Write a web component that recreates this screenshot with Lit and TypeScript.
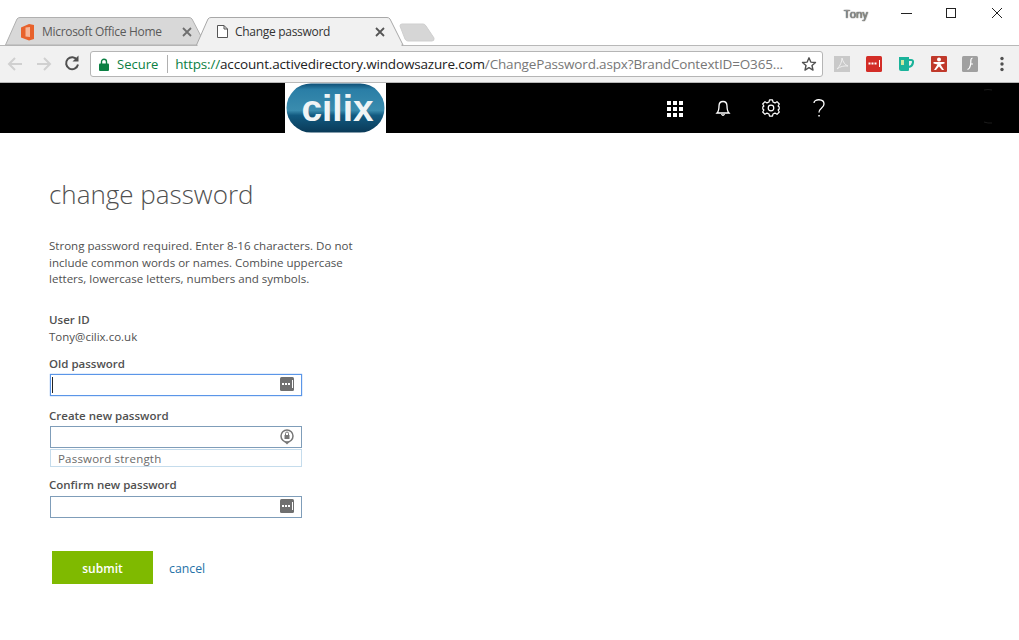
import { LitElement, html, css, svg } from "lit";
import { customElement } from "lit/decorators.js";

const keyIcon = html`<svg class="fieldicon" width="14" height="14" viewBox="0 0 14 14"><rect width="14" height="14" rx="1.5" fill="#6f6f6f"/><rect x="2" y="6" width="2" height="2" fill="#fff"/><rect x="5" y="6" width="2" height="2" fill="#fff"/><rect x="8" y="6" width="2" height="2" fill="#fff"/><rect x="12" y="3" width="1" height="8" fill="#fff"/></svg>`;

@customElement("app-root")
export class AppRoot extends LitElement {
  static styles = css`
    :host { display: block; width: 1019px; height: 640px; overflow: hidden; background: #fff; font-family: "Open Sans", "Noto Sans", sans-serif; }
    .tabstrip { height: 45px; background: #fff; position: relative; display: flex; align-items: flex-start; justify-content: flex-end; }
    .tabshapes { position: absolute; left: 0; top: 0; }
    .tabtext { position: absolute; top: 24px; font-size: 12px; line-height: 16px; white-space: nowrap; letter-spacing: -0.3px; }
    .t1 { left: 42px; color: #5a5a5a; }
    .t2 { left: 235px; color: #333; }
    .tony { margin: 7px 0 0 0; width: 175px; font-size: 10.5px; line-height: 15px; color: #999; text-shadow: 0 0 1px #333, 0 0 1px #333; }
    .toolbar { height: 36px; background: #f1f1f1; border-top: 1px solid #b8b8b8; border-bottom: 1px solid #b8b8b8; display: flex; align-items: center; box-sizing: content-box; }
    .navicons { width: 90px; flex: none; height: 36px; }
    .omni { width: 733px; flex: none; height: 26px; box-sizing: border-box; background: #fff; border: 1px solid #b5b5b5; border-radius: 3px; display: flex; align-items: center; white-space: nowrap; position: relative; }
    .lock { margin-left: 8px; flex: none; }
    .secure { color: #0b8043; margin-left: 8px; font-size: 13px; }
    .sep { width: 1px; height: 18px; background: #b0b0b0; margin: 0 7px 0 9px; flex: none; }
    .url { font-size: 13.5px; color: #777; letter-spacing: -0.16px; }
    .url .g { color: #0b8043; }
    .url .k { color: #222; }
    .star { position: absolute; right: 5px; top: 4px; }
    .exts { flex: none; }
    .header { height: 50px; background: #000; display: flex; align-items: stretch; }
    .logo { margin-left: 285px; width: 101px; height: 50px; background: #fff; flex: none; }
    .hicons { margin-left: 278px; flex: none; height: 50px; }
    .ring { margin-left: 140px; flex: none; }
    .main { padding: 43px 0 0 49px; color: #505050; font-size: 12px; }
    h1 { margin: 0; font-size: 26px; font-weight: 300; line-height: 36px; color: #505050; }
    .desc { margin: 26px 0 0; width: 320px; line-height: 16.5px; font-size: 11.55px; color: #505050; }
    .lbl { font-weight: 600; font-size: 11.5px; line-height: 16px; color: #505050; }
    .uid { margin-top: 24.5px; }
    .val { font-size: 11.5px; line-height: 16px; margin-top: 1px; color: #505050; }
    .field { margin: 3px 0 0 1px; width: 252px; height: 22px; box-sizing: border-box; border: 1px solid #7f9db9; position: relative; background: #fff; }
    .field.tight { margin-top: 2px; }
    .field.focus { border-color: #5b96e8; box-shadow: 0 0 1px #5b96e8; }
    .caret { position: absolute; left: 1px; top: 2px; width: 1px; height: 16px; background: #222; }
    .fieldicon { position: absolute; right: 7px; top: 2px; }
    .strength { margin: 1px 0 0 1px; width: 252px; height: 18px; box-sizing: border-box; border: 1px solid #c5dcec; font-size: 11.5px; line-height: 18px; padding-left: 7px; color: #6a6a6a; letter-spacing: 0.2px; }
    .gap-old { margin-top: 11px; }
    .gap-new { margin-top: 12px; }
    .gap-confirm { margin-top: 10px; }
    .actions { margin: 33px 0 0 3px; display: flex; align-items: center; }
    .submit { width: 101px; height: 33px; box-sizing: border-box; padding-top: 1px; background: #7fba00; color: #fff; font-size: 12px; font-weight: 600; display: flex; align-items: center; justify-content: center; }
    .cancel { margin-left: 16px; padding-top: 1px; color: #2672a8; font-size: 12.3px; }
  `;

  render() {
    return html`
      <div class="tabstrip">
        <svg class="tabshapes" width="1019" height="46" viewBox="0 0 1019 46">
          <path d="M5.5 45 L17 19 Q18 17.5 20 17.5 L189 17.5 Q191 17.5 192 19 L203 40 L199 45 Z" fill="#d8d8d8" stroke="#b0b0b0"/>
          <path d="M196.5 45 L208 19 Q209 17.5 211 17.5 L387 17.5 Q389 17.5 390 19 L403 45 Z" fill="#f1f1f1" stroke="#a8a8a8"/>
          <rect x="197.5" y="44" width="204" height="3" fill="#f1f1f1"/>
          <path d="M400 26 Q400 24 402 24 L423 24 Q425 24 426 26 L434 38 Q434.5 41 432 41 L408 41 Q406 41 405 39 Z" fill="#d6d6d6" stroke="#cfcfcf"/>
          <path d="M21 27.5 L29 24 L34 25 L34 39 L29 40.5 L21 37.5 Z" fill="#e8622c"/>
          <path d="M25.5 27.5 L30 27 L30 37 L25.5 36.5 Z" fill="#f6b79a"/>
          <path d="M183 28 L191 36 M191 28 L183 36" stroke="#6e6e6e" stroke-width="1.8"/>
          <path d="M217.5 25.5 H224 L227.5 29 V37.5 H217.5 Z M224 25.5 V29 H227.5" fill="#fff" stroke="#555" stroke-width="1"/>
          <path d="M376 28 L384 36 M384 28 L376 36" stroke="#555" stroke-width="1.8"/>
          <path d="M901 13.5 H912" stroke="#222" stroke-width="1"/>
          <rect x="946.5" y="8.5" width="9" height="9" fill="none" stroke="#222"/>
          <path d="M992 8 L1002 18 M1002 8 L992 18" stroke="#222" stroke-width="1"/>
        </svg>
        <span class="tabtext t1">Microsoft Office Home</span>
        <span class="tabtext t2">Change password</span>
        <div class="tony">Tony</div>
      </div>
      <div class="toolbar">
        <svg class="navicons" width="90" height="36" viewBox="0 0 90 36">
          <path d="M9 18 H22 M15 12 L9 18 L15 24" fill="none" stroke="#d0d0d0" stroke-width="2"/>
          <path d="M37 18 H50 M44 12 L50 18 L44 24" fill="none" stroke="#d0d0d0" stroke-width="2"/>
          <path d="M77.2 14 A6 6 0 1 0 78 18.5" fill="none" stroke="#505050" stroke-width="2"/>
          <path d="M78.5 9.5 V15.5 H72.5 Z" fill="#505050"/>
        </svg>
        <div class="omni">
          <svg class="lock" width="10" height="13" viewBox="0 0 10 13"><path d="M2.5 6 V3.8 A2.5 2.5 0 0 1 7.5 3.8 V6" fill="none" stroke="#0b8043" stroke-width="1.4"/><rect y="5.5" width="10" height="7.5" rx="1" fill="#0b8043"/></svg>
          <span class="secure">Secure</span>
          <span class="sep"></span>
          <span class="url"><span class="g">https://</span><span class="k">account.activedirectory.windowsazure.com</span>/ChangePassword.aspx?BrandContextID=O365...</span>
          <svg class="star" width="16" height="16" viewBox="0 0 16 16"><path d="M8 1.8 L9.8 6.1 L14.5 6.5 L11 9.5 L12 14.1 L8 11.7 L4 14.1 L5 9.5 L1.5 6.5 L6.2 6.1 Z" fill="none" stroke="#505050" stroke-width="1.4" stroke-linejoin="round"/></svg>
        </div>
        <svg class="exts" width="196" height="36" viewBox="0 0 196 36">
          <rect x="11" y="10" width="16" height="16" fill="#c9c9c9"/>
          <path d="M14 23 C17 20 19 16 19 12 C20 16 22 19 25 20 C21 19.5 17 20.5 14 23 Z" fill="none" stroke="#eee" stroke-width="1"/>
          <rect x="43" y="10" width="16" height="16" rx="1.5" fill="#d32d27"/>
          <path d="M45.5 16.5 h2 v2 h-2 z M48.5 16.5 h2 v2 h-2 z M51.5 16.5 h2 v2 h-2 z" fill="#fff"/><rect x="56" y="14" width="1" height="7" fill="#fff"/>
          <path d="M76 11 H86 V24 Q86 25 85 25 H78 Q76 25 76 23 Z" fill="#1bb39a"/>
          <path d="M86 14 H88 Q90.5 14 90 16.5 Q89.5 20 86 21" fill="none" stroke="#1bb39a" stroke-width="2"/>
          <rect x="78" y="14" width="3" height="5" fill="#cfe8a0"/>
          <rect x="108" y="10" width="16" height="16" rx="1" fill="#c0392b"/>
          <circle cx="116" cy="13.5" r="2" fill="#fff"/>
          <path d="M110.5 16 H121.5 V17.5 L117.5 18.5 L121 24 H119 L116 20.5 L113 24 H111 L114.5 18.5 L110.5 17.5 Z" fill="#fff"/>
          <rect x="139" y="10" width="16" height="16" rx="1.5" fill="#a0a0a0"/>
          <path d="M149.5 12 C146.5 12.5 148.5 16 147.5 19 C147 22 146 23 144.5 23.5 M147 18 H150" fill="none" stroke="#fff" stroke-width="1.2"/>
          <circle cx="179" cy="12.5" r="1.7" fill="#505050"/><circle cx="179" cy="18" r="1.7" fill="#505050"/><circle cx="179" cy="23.5" r="1.7" fill="#505050"/>
        </svg>
      </div>
      <div class="header">
        <div class="logo">
          <svg width="101" height="50" viewBox="0 0 101 50">
            <defs><linearGradient id="lg" x1="0" x2="0" y1="0" y2="1"><stop offset="0" stop-color="#0e4f76"/><stop offset="0.12" stop-color="#2a7ea6"/><stop offset="0.55" stop-color="#3a8cae"/><stop offset="0.65" stop-color="#125a80"/><stop offset="1" stop-color="#0a3a58"/></linearGradient></defs>
            <rect x="1.5" y="0.5" width="98" height="49" rx="24.5" fill="url(#lg)"/>
            <text x="52.5" y="38" text-anchor="middle" font-family="Liberation Sans, sans-serif" font-weight="700" font-size="37" fill="#f0f4f5">cilix</text>
          </svg>
        </div>
        <svg class="hicons" width="170" height="50" viewBox="0 0 170 50">
          ${[0, 1, 2].map((r) => [0, 1, 2].map((c) => svg`<rect x="${3 + c * 6}" y="${18 + r * 6}" width="4" height="4" fill="#fff"/>`))}
          <path d="M53 30 C55 28 55 26 55 23 C55 20 57 18.5 59 18.5 C61 18.5 63 20 63 23 C63 26 63 28 65 30 Z" fill="none" stroke="#fff" stroke-width="1.3"/>
          <path d="M57.5 31 Q59 33.5 60.5 31" fill="none" stroke="#fff" stroke-width="1.3"/>
          <g transform="translate(0,-1)" fill="none" stroke="#fff" stroke-width="1.2"><circle cx="107" cy="26" r="2.8"/><path d="M105.5 17.8 H108.5 L109 20 L111 20.9 L113 19.7 L115.3 22 L114.1 24 L115.2 25 V27 L114.1 28 L115.3 30 L113 32.3 L111 31.1 L109 32 L108.5 34.2 H105.5 L105 32 L103 31.1 L101 32.3 L98.7 30 L99.9 28 L98.8 27 V25 L99.9 24 L98.7 22 L101 19.7 L103 20.9 L105 20 Z" stroke-linejoin="round"/></g>
          <path d="M150 20 C150 15.5 160 15.5 160 21 C160 25 155 25 155 29.5" fill="none" stroke="#fff" stroke-width="1.3"/>
          <rect x="154.3" y="32" width="1.5" height="1.5" fill="#fff"/>
        </svg>
        <svg class="ring" width="24" height="50" viewBox="0 0 24 50"><path d="M10 7 A17 17 0 0 1 18 7 M18 40 A17 17 0 0 1 10 39" fill="none" stroke="#1c1c1c"/></svg>
      </div>
      <div class="main">
        <h1>change password</h1>
        <p class="desc">Strong password required. Enter 8-16 characters. Do not<br>include common words or names. Combine uppercase<br>letters, lowercase letters, numbers and symbols.</p>
        <div class="lbl uid">User ID</div>
        <div class="val">Tony@cilix.co.uk</div>
        <div class="lbl gap-old">Old password</div>
        <div class="field tight focus"><span class="caret"></span>${keyIcon}</div>
        <div class="lbl gap-new">Create new password</div>
        <div class="field tight">
          <svg class="fieldicon" width="14" height="16" viewBox="0 0 14 16"><circle cx="7" cy="7" r="6" fill="none" stroke="#777" stroke-width="1.5"/><rect x="4.5" y="6" width="5" height="4" fill="#777"/><path d="M5.5 6 V4.5 A1.5 1.5 0 0 1 8.5 4.5 V6" fill="none" stroke="#777"/><path d="M4.5 13 H9.5 L7 15.5 Z" fill="#777"/></svg>
        </div>
        <div class="strength">Password strength</div>
        <div class="lbl gap-confirm">Confirm new password</div>
        <div class="field">${keyIcon}</div>
        <div class="actions"><div class="submit">submit</div><div class="cancel">cancel</div></div>
      </div>
    `;
  }
}
